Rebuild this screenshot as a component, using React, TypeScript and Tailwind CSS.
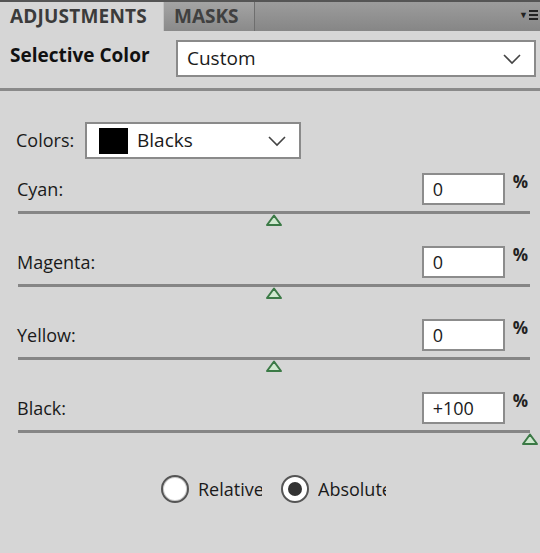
import React from 'react'

function Chevron() {
  return (
    <svg width="20" height="12" viewBox="0 0 20 12" className="text-[#444]">
      <path d="M2 2 L10 10 L18 2" fill="none" stroke="currentColor" strokeWidth="1.6" />
    </svg>
  )
}

function Thumb() {
  return (
    <svg width="18" height="13" viewBox="0 0 18 13">
      <path d="M9 1.5 L16 11 L2 11 Z" fill="#cfe8cf" stroke="#3b7a46" strokeWidth="2" strokeLinejoin="round" />
    </svg>
  )
}

interface SliderRowProps {
  label: string
  value: string
  pos: number
}

function SliderRow({ label, value, pos }: SliderRowProps) {
  return (
    <div className="h-[73px]">
      <div className="flex items-center justify-between pl-[17px] pr-[12px] h-[36px]">
        <span className="text-[18px] text-[#1a1a1a]">{label}</span>
        <div className="flex items-start gap-[8px]">
          <div className="w-[83px] h-[32px] bg-white border-2 border-[#8c8c8c] flex items-center pl-[9px] text-[18px] text-[#1a1a1a]">
            {value}
          </div>
          <span className="text-[17px] font-bold text-[#222] -mt-[4px]">%</span>
        </div>
      </div>
      <div className="relative ml-[18px] mr-[10px] mt-[4px]">
        <div className="h-[3px] bg-[#868686]" />
        <div className="absolute top-[3px]" style={{ left: `calc(${pos}% - 9px)` }}>
          <Thumb />
        </div>
      </div>
    </div>
  )
}

export default function App() {
  return (
    <div className="w-[540px] h-[553px] bg-[#d6d6d6] overflow-hidden" style={{ fontFamily: '"Open Sans", "Noto Sans", sans-serif' }}>
      {/* tabs */}
      <div className="h-[31px] bg-gradient-to-b from-[#9c9c9c] to-[#868686] border-t-2 border-[#555] flex relative">
        <div className="w-[163px] bg-[#d6d6d6] flex items-center pl-[10px] text-[19px] font-bold text-[#3b3b3b] tracking-[0.2px]">
          ADJUSTMENTS
        </div>
        <div className="w-[92px] bg-gradient-to-b from-[#a4a4a4] to-[#8a8a8a] border-r border-[#6e6e6e] border-l border-l-[#c4c4c4] flex items-center pl-[10px] text-[19px] font-bold text-[#404040]">
          MASKS
        </div>
        <div className="absolute right-[2px] top-[6px] flex items-center gap-[1px]">
          <span className="text-[9px] text-[#222]">▼</span>
          <div className="flex flex-col gap-[2px]">
            <div className="w-[9px] h-[2px] bg-[#222]" />
            <div className="w-[9px] h-[2px] bg-[#222]" />
            <div className="w-[9px] h-[2px] bg-[#222]" />
          </div>
        </div>
      </div>

      {/* preset row */}
      <div className="flex items-center h-[55px] pl-[10px] pr-[4px]">
        <span className="w-[166px] whitespace-nowrap text-[19px] font-bold text-[#111] -mt-[6px]">Selective Color</span>
        <div className="flex-1 h-[37px] bg-white border-2 border-[#8a8a8a] flex items-center justify-between pl-[9px] pr-[12px]">
          <span className="text-[19px] text-[#1a1a1a]">Custom</span>
          <Chevron />
        </div>
      </div>
      <div className="h-[3px] bg-[#8a8a8a] mt-[2px]" />

      {/* colors row */}
      <div className="flex items-center mt-[31px] pl-[16px]">
        <span className="w-[69px] text-[18px] text-[#1a1a1a]">Colors:</span>
        <div className="w-[216px] h-[37px] bg-white border-2 border-[#8a8a8a] flex items-center justify-between pl-[12px] pr-[12px]">
          <div className="flex items-center gap-[9px]">
            <div className="w-[29px] h-[26px] bg-black" />
            <span className="text-[19px] text-[#1a1a1a]">Blacks</span>
          </div>
          <Chevron />
        </div>
      </div>

      <div className="mt-[12px]">
        <SliderRow label="Cyan:" value="0" pos={50} />
        <SliderRow label="Magenta:" value="0" pos={50} />
        <SliderRow label="Yellow:" value="0" pos={50} />
        <SliderRow label="Black:" value="+100" pos={100} />
      </div>

      {/* radios */}
      <div className="flex items-center mt-[12px] pl-[161px]">
        <label className="flex items-center gap-[9px]">
          <span className="w-[28px] h-[28px] rounded-full bg-white border-2 border-[#555] shadow-[inset_0_0_0_1px_#ccc]" />
          <span className="w-[64px] overflow-hidden whitespace-nowrap text-[18px] text-[#1a1a1a]">Relative</span>
        </label>
        <label className="flex items-center gap-[9px] ml-[19px]">
          <span className="w-[28px] h-[28px] rounded-full bg-white border-2 border-[#555] flex items-center justify-center">
            <span className="w-[14px] h-[14px] rounded-full bg-[#333]" />
          </span>
          <span className="w-[68px] overflow-hidden whitespace-nowrap text-[18px] text-[#1a1a1a]">Absolute</span>
        </label>
      </div>
    </div>
  )
}
